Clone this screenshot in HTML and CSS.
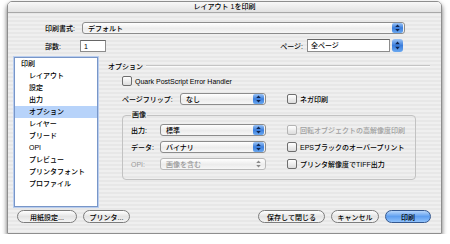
FILE: index.html
```html
<!DOCTYPE html>
<html lang="ja">
<head>
    <meta charset="UTF-8">
    <title>レイアウト 1を印刷</title>
    <link rel="stylesheet" href="styles.css">
</head>
<body>

<div class="window">
    <div class="titlebar">レイアウト 1を印刷</div>

    <!-- Print style / copies / pages -->
    <div class="top">
        <div class="row">
            <span class="label">印刷書式:</span>
            <div class="popup style-popup">
                <span class="value">デフォルト</span>
                <span class="arrows"><svg width="11" height="10" viewBox="0 0 11 10"><path d="M5.5 1.5 L7.8 4 H3.2Z M5.5 8.5 L7.8 6 H3.2Z" fill="#10254f"/></svg></span>
            </div>
        </div>
        <div class="row row-copies">
            <span class="label">部数:</span>
            <div class="field copies">1</div>
            <div class="pages">
                <span class="label">ページ:</span>
                <div class="field pages-field">全ページ</div>
                <span class="stepper"><svg width="11" height="13" viewBox="0 0 11 13"><path d="M5.5 2.5 L7.8 5.2 H3.2Z M5.5 10.5 L7.8 7.8 H3.2Z" fill="#10254f"/></svg></span>
            </div>
        </div>
    </div>

    <div class="main">
        <ul class="list">
            <li class="root">印刷</li>
            <li>レイアウト</li>
            <li>設定</li>
            <li>出力</li>
            <li class="selected">オプション</li>
            <li>レイヤー</li>
            <li>ブリード</li>
            <li>OPI</li>
            <li>プレビュー</li>
            <li>プリンタフォント</li>
            <li>プロファイル</li>
        </ul>

        <div class="panel">
            <div class="section-title"><span>オプション</span><span class="rule"></span></div>

            <label class="check quark"><span class="box"></span>Quark PostScript Error Handler</label>

            <div class="flip-row">
                <span class="flip-label">ページフリップ:</span>
                <div class="popup flip-popup">
                    <span class="value">なし</span>
                    <span class="arrows"><svg width="11" height="10" viewBox="0 0 11 10"><path d="M5.5 1.5 L7.8 4 H3.2Z M5.5 8.5 L7.8 6 H3.2Z" fill="#10254f"/></svg></span>
                </div>
                <label class="check nega"><span class="box"></span>ネガ印刷</label>
            </div>

            <fieldset class="group">
                <legend>画像</legend>
                <div class="group-grid">
                    <span class="glabel">出力:</span>
                    <div class="popup">
                        <span class="value">標準</span>
                        <span class="arrows"><svg width="11" height="10" viewBox="0 0 11 10"><path d="M5.5 1.5 L7.8 4 H3.2Z M5.5 8.5 L7.8 6 H3.2Z" fill="#10254f"/></svg></span>
                    </div>
                    <label class="check disabled"><span class="box"></span>回転オブジェクトの高解像度印刷</label>

                    <span class="glabel">データ:</span>
                    <div class="popup">
                        <span class="value">バイナリ</span>
                        <span class="arrows"><svg width="11" height="10" viewBox="0 0 11 10"><path d="M5.5 1.5 L7.8 4 H3.2Z M5.5 8.5 L7.8 6 H3.2Z" fill="#10254f"/></svg></span>
                    </div>
                    <label class="check"><span class="box"></span>EPSブラックのオーバープリント</label>

                    <span class="glabel disabled">OPI:</span>
                    <div class="popup popup-disabled">
                        <span class="value">画像を含む</span>
                        <span class="arrows"><svg width="11" height="10" viewBox="0 0 11 10"><path d="M5.5 1.5 L7.8 4 H3.2Z M5.5 8.5 L7.8 6 H3.2Z" fill="#8a8a8a"/></svg></span>
                    </div>
                    <label class="check"><span class="box"></span>プリンタ解像度でTIFF出力</label>
                </div>
            </fieldset>
        </div>
    </div>

    <div class="buttons">
        <button class="btn paper">用紙設定...</button>
        <button class="btn printer">プリンタ...</button>
        <span class="spacer"></span>
        <button class="btn save">保存して閉じる</button>
        <button class="btn cancel">キャンセル</button>
        <button class="btn default">印刷</button>
    </div>
</div>

</body>
</html>
```

FILE: styles.css
```css
body {
    margin: 0;
    background-color: #fff;
    font-family: "Liberation Sans", "Noto Sans CJK JP", sans-serif;
    font-size: 7px;
    font-weight: 500;
    color: #000;
}

.window {
    margin: 1px 0 0 7px;
    width: 435px;
    height: 233px;
    box-sizing: border-box;
    border: 1px solid #8e8e8e;
    border-radius: 5px 5px 0 0;
    background: repeating-linear-gradient(to bottom, #efefef 0, #efefef 2px, #e7e7e7 2px, #e7e7e7 4px);
    box-shadow: 0 3px 5px rgba(0, 0, 0, 0.6);
}

.titlebar {
    height: 10px;
    line-height: 10px;
    text-align: center;
    border-bottom: 1px solid #a8a8a8;
    border-radius: 4px 4px 0 0;
    background: linear-gradient(#f8f8f8, #e2e2e2);
}

/* Top rows */
.top {
    padding: 9px 0 0 37px;
}
.row {
    display: flex;
    align-items: center;
    height: 12px;
}
.row .label {
    width: 35px;
    flex: none;
}
.row-copies {
    margin-top: 5px;
    width: 358px;
    height: 13px;
}

.popup {
    display: flex;
    align-items: center;
    height: 12px;
    box-sizing: border-box;
    border: 1px solid #8c8c8c;
    border-radius: 3px;
    background: linear-gradient(#ffffff, #ececec 55%, #f7f7f7);
    overflow: hidden;
}
.popup .value {
    flex: 1;
    padding-left: 5px;
    white-space: nowrap;
}
.popup .arrows {
    display: flex;
    width: 11px;
    height: 10px;
    margin-right: 1px;
    border-radius: 2px;
    background: linear-gradient(#9cc4f5, #3a7ddc 50%, #6aa8f0);
}
.popup-disabled {
    border-color: #b8b8b8;
    color: #999;
}
.popup-disabled .arrows {
    background: none;
}
.style-popup {
    width: 323px;
    margin-left: 2px;
}

.field {
    height: 12px;
    line-height: 11px;
    box-sizing: border-box;
    border: 1px solid #8c8c8c;
    border-top-color: #666;
    background-color: #fff;
    padding-left: 3px;
}
.copies {
    width: 26px;
}
.pages {
    display: flex;
    align-items: center;
    margin-left: auto;
}
.pages .label {
    width: auto;
    margin-right: 4px;
}
.pages-field {
    width: 83px;
    height: 13px;
}
.stepper {
    display: flex;
    width: 11px;
    height: 13px;
    margin-left: 2px;
    border-radius: 3px;
    background: linear-gradient(#9cc4f5, #3a7ddc 50%, #6aa8f0);
}

/* Main area */
.main {
    display: flex;
    margin-top: 5px;
    padding-left: 6px;
}

.list {
    list-style: none;
    margin: 0;
    padding: 0;
    width: 84px;
    height: 150px;
    box-sizing: border-box;
    border: 1px solid #7896c8;
    box-shadow: 0 0 0 1px #b9cdee;
    background-color: #fff;
}
.list li {
    height: 12px;
    line-height: 12px;
    padding-left: 14px;
}
.list li.root {
    padding-left: 6px;
}
.list li.selected {
    background-color: #b7d3fa;
}

.panel {
    margin-left: 10px;
    width: 322px;
    padding-top: 4px;
}

.section-title {
    display: flex;
    align-items: center;
    height: 10px;
}
.section-title .rule {
    flex: 1;
    margin-left: 3px;
    border-top: 1px solid #c4c4c4;
    border-bottom: 1px solid #fafafa;
}

.check {
    display: flex;
    align-items: center;
    height: 10px;
    white-space: nowrap;
}
.check .box {
    width: 8px;
    height: 8px;
    margin-right: 3px;
    border: 1px solid #6e6e6e;
    border-radius: 2px;
    background: linear-gradient(#ffffff, #dcdcdc);
}
.check.disabled {
    color: #a0a0a0;
}
.check.disabled .box {
    border-color: #b4b4b4;
}
.quark {
    margin: 5px 0 0 14px;
}

.flip-row {
    display: flex;
    align-items: center;
    height: 12px;
    margin: 7px 0 0 14px;
}
.flip-label {
    width: 58px;
}
.flip-popup {
    width: 86px;
}
.nega {
    margin-left: 21px;
}

.group {
    margin: 5px 0 0 14px;
    width: 294px;
    box-sizing: border-box;
    padding: 4px 0 9px 8px;
    border: 1px solid #c2c2c2;
    border-radius: 4px;
}
.group legend {
    padding: 0 1px;
    line-height: 10px;
}
.group-grid {
    display: grid;
    grid-template-columns: 29px 106px 1fr;
    grid-auto-rows: 12px;
    row-gap: 5px;
    align-items: center;
}
.group-grid .check {
    margin-left: 21px;
}
.glabel.disabled {
    color: #9a9a9a;
}

/* Bottom buttons */
.buttons {
    display: flex;
    align-items: center;
    margin-top: 3px;
    padding: 0 10px 0 9px;
    gap: 6px;
}
.spacer {
    flex: 1;
}
.btn {
    height: 13px;
    padding: 0;
    box-sizing: border-box;
    font: inherit;
    color: #000;
    border: 1px solid #7c7c7c;
    border-radius: 7px;
    background: linear-gradient(#ffffff, #e4e4e4 50%, #f4f4f4);
}
.paper {
    width: 60px;
}
.printer {
    width: 47px;
}
.save {
    width: 67px;
}
.cancel {
    width: 48px;
}
.default {
    width: 46px;
    border-color: #35588f;
    background: linear-gradient(#b7d6fb, #5f9ff0 50%, #8fc1fb);
}
```
